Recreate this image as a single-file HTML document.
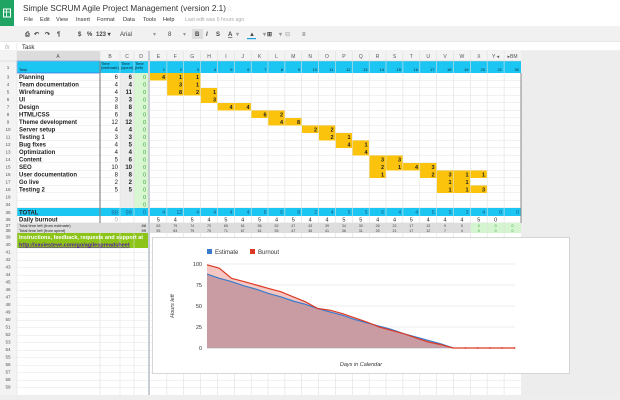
<!DOCTYPE html>
<html><head><meta charset="utf-8"><style>
html,body{margin:0;padding:0;width:620px;height:400px;overflow:hidden;background:#fff}
svg{display:block;font-family:"Liberation Sans",Arial,sans-serif}
</style></head><body>
<svg width="620" height="400" viewBox="0 0 620 400" xmlns="http://www.w3.org/2000/svg">
<defs>
<pattern id="hl" x="0" y="73" width="10" height="7.5" patternUnits="userSpaceOnUse"><rect width="10" height="7.5" fill="none"/><line x1="0" y1="7.25" x2="10" y2="7.25" stroke="#e6e6e6" stroke-width="0.6"/></pattern>
</defs>
<rect x="0" y="0" width="620" height="27" fill="#fff"/>
<rect x="0" y="0" width="14" height="27" fill="#1fa463"/>
<rect x="3.5" y="9" width="7" height="8" fill="none" stroke="#fff" stroke-width="1"/>
<line x1="3.5" y1="12" x2="10.5" y2="12" stroke="#fff" stroke-width="0.8"/><line x1="6.5" y1="9" x2="6.5" y2="17" stroke="#fff" stroke-width="0.8"/>
<text x="23" y="11" font-size="8.2" fill="#333">Simple SCRUM Agile Project Management (version 2.1)</text>
<text x="226" y="11" font-size="8" fill="#ccc">☆</text>
<g font-size="5.6" fill="#333"><text x="24" y="21">File</text><text x="40" y="21">Edit</text><text x="56" y="21">View</text><text x="76" y="21">Insert</text><text x="97" y="21">Format</text><text x="123" y="21">Data</text><text x="143" y="21">Tools</text><text x="163" y="21">Help</text></g>
<text x="185" y="21" font-size="5.2" fill="#aaa">Last edit was 6 hours ago</text>
<rect x="0" y="26" width="620" height="16" fill="#f1f1f1"/>
<line x1="0" y1="41.5" x2="620" y2="41.5" stroke="#ddd" stroke-width="0.6"/>
<g font-size="6" fill="#444" font-weight="bold"><text x="25" y="36">⎙</text><text x="34" y="36">↶</text><text x="45" y="36">↷</text><text x="57" y="36">¶</text><text x="78" y="36">$</text><text x="87" y="36">%</text><text x="96" y="36">123 ▾</text><text x="120" y="36" font-weight="normal">Arial</text><text x="153" y="36" font-weight="normal" fill="#999">▾</text><text x="168" y="36" font-weight="normal">8</text><text x="183" y="36" fill="#999" font-weight="normal">▾</text></g>
<rect x="192" y="29" width="11" height="10" fill="#ddd"/>
<g font-size="6" fill="#444" font-weight="bold"><text x="195" y="36">B</text><text x="206" y="36" font-style="italic">I</text><text x="216" y="36">S</text><text x="228" y="36" text-decoration="underline">A</text><text x="236" y="36" fill="#999">▾</text><text x="249" y="36">▲</text><text x="263" y="36" fill="#999">▾</text><text x="267" y="36">⊞</text><text x="279" y="36" fill="#999">▾</text><text x="285" y="36" fill="#bbb">⊟</text><text x="302" y="36">≡</text></g>
<rect x="247" y="38" width="9" height="1.2" fill="#1ea0e0"/>
<rect x="0" y="42" width="620" height="9" fill="#fff"/>
<text x="5" y="49" font-size="6" fill="#aaa" font-style="italic">fx</text>
<line x1="17" y1="43" x2="17" y2="50" stroke="#ddd" stroke-width="0.6"/>
<text x="22" y="49" font-size="6" fill="#222">Task</text>
<line x1="0" y1="51" x2="620" y2="51" stroke="#ccc" stroke-width="0.6"/>
<rect x="521" y="51" width="99" height="349" fill="#ededed"/>
<rect x="0" y="51" width="521" height="10" fill="#f3f3f3"/>
<rect x="17" y="51" width="83" height="10" fill="#dcdcdc"/>
<rect x="0" y="61" width="17" height="335" fill="#f3f3f3"/>
<rect x="17" y="73" width="504" height="323" fill="url(#hl)"/>
<rect x="120" y="73" width="14" height="135" fill="#ececec"/>
<rect x="134" y="73" width="14" height="135" fill="#d8f6d2"/>
<rect x="17" y="61" width="131" height="12" fill="#1bc6f2"/>
<rect x="150" y="61" width="371" height="12" fill="#1bc6f2"/>
<rect x="17" y="61" width="83" height="12" fill="none" stroke="#3a78e0" stroke-width="0.8"/>
<rect x="17" y="208" width="131" height="8" fill="#1bc6f2"/>
<rect x="150" y="208" width="371" height="8" fill="#1bc6f2"/>
<rect x="17" y="223" width="131" height="10" fill="#dddddd"/>
<rect x="150" y="223" width="320" height="10" fill="#dddddd"/>
<rect x="470" y="223" width="51" height="10" fill="#d4f5cf"/>
<rect x="17" y="233" width="131" height="15" fill="#8cc418"/>
<g fill="#fcc30d">
<rect x="150" y="73" width="50.6" height="7.5"/>
<rect x="166.9" y="80.5" width="33.7" height="7.5"/>
<rect x="166.9" y="88" width="50.5" height="7.5"/>
<rect x="200.6" y="95.5" width="16.9" height="7.5"/>
<rect x="217.4" y="103" width="33.7" height="7.5"/>
<rect x="251.2" y="110.5" width="33.7" height="7.5"/>
<rect x="268" y="118" width="33.7" height="7.5"/>
<rect x="301.7" y="125.5" width="33.7" height="7.5"/>
<rect x="318.6" y="133" width="33.7" height="7.5"/>
<rect x="335.5" y="140.5" width="33.7" height="7.5"/>
<rect x="352.3" y="148" width="16.9" height="7.5"/>
<rect x="369.2" y="155.5" width="33.7" height="7.5"/>
<rect x="369.2" y="163" width="67.4" height="7.5"/>
<rect x="369.2" y="170.5" width="16.8" height="7.5"/>
<rect x="419.8" y="170.5" width="67.4" height="7.5"/>
<rect x="436.6" y="178" width="33.7" height="7.5"/>
<rect x="436.6" y="185.5" width="50.6" height="7.5"/>
</g>
<g stroke="#e0e0e0" stroke-width="0.6">
<line x1="17" y1="51" x2="17" y2="396"/><line x1="120" y1="51" x2="120" y2="396"/><line x1="134" y1="51" x2="134" y2="396"/>
<line x1="166.9" y1="51" x2="166.9" y2="396"/><line x1="183.7" y1="51" x2="183.7" y2="396"/><line x1="200.6" y1="51" x2="200.6" y2="396"/><line x1="217.4" y1="51" x2="217.4" y2="396"/><line x1="234.3" y1="51" x2="234.3" y2="396"/><line x1="251.2" y1="51" x2="251.2" y2="396"/><line x1="268" y1="51" x2="268" y2="396"/><line x1="284.9" y1="51" x2="284.9" y2="396"/><line x1="301.7" y1="51" x2="301.7" y2="396"/><line x1="318.6" y1="51" x2="318.6" y2="396"/><line x1="335.5" y1="51" x2="335.5" y2="396"/><line x1="352.3" y1="51" x2="352.3" y2="396"/><line x1="369.2" y1="51" x2="369.2" y2="396"/><line x1="386" y1="51" x2="386" y2="396"/><line x1="402.9" y1="51" x2="402.9" y2="396"/><line x1="419.8" y1="51" x2="419.8" y2="396"/><line x1="436.6" y1="51" x2="436.6" y2="396"/><line x1="453.5" y1="51" x2="453.5" y2="396"/><line x1="470.3" y1="51" x2="470.3" y2="396"/><line x1="487.2" y1="51" x2="487.2" y2="396"/><line x1="504.1" y1="51" x2="504.1" y2="396"/>
</g>
<line x1="100" y1="51" x2="100" y2="396" stroke="#ddd" stroke-width="0.6"/>
<line x1="100" y1="61" x2="100" y2="223" stroke="#888" stroke-width="1.2"/>
<rect x="148" y="51" width="2" height="345" fill="#c9cdd6"/>
<line x1="521" y1="73" x2="521" y2="223" stroke="#888" stroke-width="1"/>
<line x1="0" y1="61" x2="521" y2="61" stroke="#ccc" stroke-width="0.5"/>
<g font-size="5" fill="#555" text-anchor="middle">
<text x="58" y="58">A</text><text x="110" y="58">B</text><text x="127" y="58">C</text><text x="141" y="58">D</text>
<text x="158.4" y="58">E</text><text x="175.3" y="58">F</text><text x="192.2" y="58">G</text><text x="209" y="58">H</text><text x="225.9" y="58">I</text><text x="242.7" y="58">J</text><text x="259.6" y="58">K</text><text x="276.5" y="58">L</text><text x="293.3" y="58">M</text><text x="310.2" y="58">N</text><text x="327" y="58">O</text><text x="343.9" y="58">P</text><text x="360.8" y="58">Q</text><text x="377.6" y="58">R</text><text x="394.5" y="58">S</text><text x="411.3" y="58">T</text><text x="428.2" y="58">U</text><text x="445" y="58">V</text><text x="461.9" y="58">W</text><text x="478.8" y="58">X</text><text x="495.6" y="58">Y ◂</text><text x="512.5" y="58">▸BM</text>
</g>
<g font-size="4.6" fill="#555" text-anchor="middle">
<text x="8" y="69">1</text><text x="8" y="78.5">3</text><text x="8" y="86">4</text><text x="8" y="93.5">5</text><text x="8" y="101">6</text><text x="8" y="108.5">7</text><text x="8" y="116">8</text><text x="8" y="123.5">9</text><text x="8" y="131">10</text><text x="8" y="138.5">11</text><text x="8" y="146">12</text><text x="8" y="153.5">13</text><text x="8" y="161">14</text><text x="8" y="168.5">15</text><text x="8" y="176">16</text><text x="8" y="183.5">17</text><text x="8" y="191">18</text><text x="8" y="198.5">19</text><text x="8" y="206">34</text><text x="8" y="214">35</text><text x="8" y="221">36</text><text x="8" y="227">37</text><text x="8" y="232">38</text><text x="8" y="238.5">39</text><text x="8" y="246">40</text>
<text x="8" y="253.5">41</text><text x="8" y="261">42</text><text x="8" y="268.5">43</text><text x="8" y="276">44</text><text x="8" y="283.5">45</text><text x="8" y="291">46</text><text x="8" y="298.5">47</text><text x="8" y="306">48</text><text x="8" y="313.5">49</text><text x="8" y="321">50</text><text x="8" y="328.5">51</text><text x="8" y="336">52</text><text x="8" y="343.5">53</text><text x="8" y="351">54</text><text x="8" y="358.5">55</text><text x="8" y="366">56</text><text x="8" y="373.5">57</text><text x="8" y="381">58</text><text x="8" y="388.5">59</text>
</g>
<g font-size="4" fill="#123">
<text x="19" y="71">Task</text><text x="101" y="65">Time</text><text x="101" y="69">(estimate)</text><text x="121" y="65">Time</text><text x="121" y="69">(spent)</text><text x="135" y="65">Time</text><text x="135" y="69">(left)</text>
</g>
<g font-size="4" fill="#123" text-anchor="end">
<text x="165" y="71">1</text><text x="182" y="71">2</text><text x="199" y="71">3</text><text x="216" y="71">4</text><text x="232.5" y="71">5</text><text x="249.5" y="71">6</text><text x="266.5" y="71">7</text><text x="283" y="71">8</text><text x="300" y="71">9</text><text x="317" y="71">10</text><text x="333.5" y="71">11</text><text x="350.5" y="71">12</text><text x="367.5" y="71">13</text><text x="384" y="71">14</text><text x="401" y="71">15</text><text x="418" y="71">16</text><text x="434.5" y="71">17</text><text x="451.5" y="71">18</text><text x="468.5" y="71">19</text><text x="485" y="71">20</text><text x="502" y="71">21</text><text x="519" y="71">30</text>
</g>
<g font-size="6" font-weight="bold" fill="#222">
<text x="19" y="79">Planning</text><text x="19" y="86.5">Team documentation</text><text x="19" y="94">Wireframing</text><text x="19" y="101.5">UI</text><text x="19" y="109">Design</text><text x="19" y="116.5">HTML/CSS</text><text x="19" y="124">Theme development</text><text x="19" y="131.5">Server setup</text><text x="19" y="139">Testing 1</text><text x="19" y="146.5">Bug fixes</text><text x="19" y="154">Optimization</text><text x="19" y="161.5">Content</text><text x="19" y="169">SEO</text><text x="19" y="176.5">User documentation</text><text x="19" y="184">Go live</text><text x="19" y="191.5">Testing 2</text>
<text x="19" y="214.5">TOTAL</text><text x="19" y="221.5">Daily burnout</text>
</g>
<g font-size="6" fill="#222" text-anchor="end">
<text x="118" y="79">6</text><text x="118" y="86.5">4</text><text x="118" y="94">4</text><text x="118" y="101.5">3</text><text x="118" y="109">8</text><text x="118" y="116.5">6</text><text x="118" y="124">12</text><text x="118" y="131.5">4</text><text x="118" y="139">3</text><text x="118" y="146.5">4</text><text x="118" y="154">4</text><text x="118" y="161.5">5</text><text x="118" y="169">10</text><text x="118" y="176.5">8</text><text x="118" y="184">2</text><text x="118" y="191.5">5</text>
</g>
<g font-size="6" fill="#222" text-anchor="end" font-weight="bold">
<text x="132" y="79">6</text><text x="132" y="86.5">4</text><text x="132" y="94">11</text><text x="132" y="101.5">3</text><text x="132" y="109">8</text><text x="132" y="116.5">8</text><text x="132" y="124">12</text><text x="132" y="131.5">4</text><text x="132" y="139">3</text><text x="132" y="146.5">5</text><text x="132" y="154">4</text><text x="132" y="161.5">6</text><text x="132" y="169">10</text><text x="132" y="176.5">8</text><text x="132" y="184">2</text><text x="132" y="191.5">5</text>
</g>
<g font-size="5.5" fill="#3aa63a" text-anchor="end">
<text x="146" y="79">0</text><text x="146" y="86.5">0</text><text x="146" y="94">0</text><text x="146" y="101.5">0</text><text x="146" y="109">0</text><text x="146" y="116.5">0</text><text x="146" y="124">0</text><text x="146" y="131.5">0</text><text x="146" y="139">0</text><text x="146" y="146.5">0</text><text x="146" y="154">0</text><text x="146" y="161.5">0</text><text x="146" y="169">0</text><text x="146" y="176.5">0</text><text x="146" y="184">0</text><text x="146" y="191.5">0</text><text x="146" y="199">0</text><text x="146" y="206.5">0</text>
</g>
<g font-size="6" fill="#1a6a9a" text-anchor="end"><text x="118" y="214.5">88</text><text x="132" y="214.5">99</text><text x="146" y="214.5">0</text></g>
<text x="118" y="221.5" font-size="6" fill="#aaa" text-anchor="end">0</text>
<g font-size="4" fill="#222"><text x="19" y="227">Total time left (from estimate)</text><text x="19" y="232">Total time left (from spent)</text></g>
<g font-size="4" fill="#222" text-anchor="end"><text x="146" y="227">88</text><text x="146" y="232">99</text></g>
<text x="19" y="239" font-size="5.5" font-weight="bold" fill="#fff">Instructions, feedback, requests and support at</text>
<text x="19" y="246.5" font-size="5.5" font-weight="bold" fill="#5a1fa0" text-decoration="underline">http://xaviesteve.com/go/agilespreadsheet</text>
<g font-size="5.5" fill="#222" text-anchor="end" font-weight="bold">
<text x="165" y="79">4</text><text x="182" y="79">1</text><text x="199" y="79">1</text>
<text x="182" y="86.5">3</text><text x="199" y="86.5">1</text>
<text x="182" y="94">8</text><text x="199" y="94">2</text><text x="216" y="94">1</text>
<text x="216" y="101.5">3</text>
<text x="232.5" y="109">4</text><text x="249.5" y="109">4</text>
<text x="266.5" y="116.5">6</text><text x="283" y="116.5">2</text>
<text x="283" y="124">4</text><text x="300" y="124">8</text>
<text x="317" y="131.5">2</text><text x="333.5" y="131.5">2</text>
<text x="333.5" y="139">2</text><text x="350.5" y="139">1</text>
<text x="350.5" y="146.5">4</text><text x="367.5" y="146.5">1</text>
<text x="367.5" y="154">4</text>
<text x="384" y="161.5">3</text><text x="401" y="161.5">3</text>
<text x="384" y="169">2</text><text x="401" y="169">1</text><text x="418" y="169">4</text><text x="434.5" y="169">3</text>
<text x="384" y="176.5">1</text><text x="434.5" y="176.5">2</text><text x="451.5" y="176.5">3</text><text x="468.5" y="176.5">1</text><text x="485" y="176.5">1</text>
<text x="451.5" y="184">1</text><text x="468.5" y="184">1</text>
<text x="451.5" y="191.5">1</text><text x="468.5" y="191.5">1</text><text x="485" y="191.5">3</text>
</g>
<g font-size="5" fill="#1a5a8a" text-anchor="end">
<text x="165" y="214">4</text><text x="182" y="214">12</text><text x="199" y="214">4</text><text x="216" y="214">4</text><text x="232.5" y="214">4</text><text x="249.5" y="214">4</text><text x="266.5" y="214">6</text><text x="283" y="214">6</text><text x="300" y="214">8</text><text x="317" y="214">2</text><text x="333.5" y="214">4</text><text x="350.5" y="214">5</text><text x="367.5" y="214">5</text><text x="384" y="214">6</text><text x="401" y="214">4</text><text x="418" y="214">4</text><text x="434.5" y="214">5</text><text x="451.5" y="214">5</text><text x="468.5" y="214">3</text><text x="485" y="214">4</text><text x="502" y="214">0</text><text x="519" y="214">0</text>
</g>
<g font-size="5.5" fill="#222" text-anchor="middle">
<text x="158.4" y="221.5">5</text><text x="175.3" y="221.5">4</text><text x="192.2" y="221.5">5</text><text x="209" y="221.5">4</text><text x="225.9" y="221.5">5</text><text x="242.7" y="221.5">4</text><text x="259.6" y="221.5">5</text><text x="276.5" y="221.5">4</text><text x="293.3" y="221.5">5</text><text x="310.2" y="221.5">4</text><text x="327" y="221.5">4</text><text x="343.9" y="221.5">5</text><text x="360.8" y="221.5">5</text><text x="377.6" y="221.5">4</text><text x="394.5" y="221.5">4</text><text x="411.3" y="221.5">5</text><text x="428.2" y="221.5">4</text><text x="445" y="221.5">4</text><text x="461.9" y="221.5">4</text><text x="478.8" y="221.5">5</text><text x="495.6" y="221.5">0</text>
</g>
<g font-size="3.6" fill="#444" text-anchor="middle">
<text x="158.4" y="227">83</text><text x="175.3" y="227">79</text><text x="192.2" y="227">74</text><text x="209" y="227">70</text><text x="225.9" y="227">65</text><text x="242.7" y="227">61</text><text x="259.6" y="227">56</text><text x="276.5" y="227">52</text><text x="293.3" y="227">47</text><text x="310.2" y="227">43</text><text x="327" y="227">39</text><text x="343.9" y="227">34</text><text x="360.8" y="227">30</text><text x="377.6" y="227">26</text><text x="394.5" y="227">22</text><text x="411.3" y="227">17</text><text x="428.2" y="227">13</text><text x="445" y="227">9</text><text x="461.9" y="227">5</text><text x="478.8" y="227" fill="#3aa63a">0</text><text x="495.6" y="227" fill="#3aa63a">0</text><text x="512.5" y="227" fill="#3aa63a">0</text>
<text x="158.4" y="232">95</text><text x="175.3" y="232">83</text><text x="192.2" y="232">79</text><text x="209" y="232">75</text><text x="225.9" y="232">71</text><text x="242.7" y="232">67</text><text x="259.6" y="232">61</text><text x="276.5" y="232">55</text><text x="293.3" y="232">47</text><text x="310.2" y="232">45</text><text x="327" y="232">41</text><text x="343.9" y="232">36</text><text x="360.8" y="232">31</text><text x="377.6" y="232">25</text><text x="394.5" y="232">21</text><text x="411.3" y="232">17</text><text x="428.2" y="232">12</text><text x="445" y="232">7</text><text x="461.9" y="232">4</text><text x="478.8" y="232" fill="#3aa63a">0</text><text x="495.6" y="232" fill="#3aa63a">0</text><text x="512.5" y="232" fill="#3aa63a">0</text>
</g>
<rect x="152.5" y="237.5" width="417" height="136" fill="#fff" stroke="#ccc" stroke-width="0.8"/>
<rect x="207" y="249" width="5" height="5" fill="#3a7ccb"/>
<text x="215" y="254" font-size="6" fill="#333">Estimate</text>
<rect x="250" y="249" width="5" height="5" fill="#dc3a26"/>
<text x="258" y="254" font-size="6" fill="#333">Burnout</text>
<g stroke="#e6e6e6" stroke-width="0.8"><line x1="207" y1="264" x2="515" y2="264"/><line x1="207" y1="285" x2="515" y2="285"/><line x1="207" y1="306" x2="515" y2="306"/><line x1="207" y1="327" x2="515" y2="327"/></g>
<g font-size="5.5" fill="#333" text-anchor="end"><text x="202" y="266">100</text><text x="202" y="287">75</text><text x="202" y="308">50</text><text x="202" y="329">25</text><text x="202" y="350">0</text></g>
<text transform="translate(174,306) rotate(-90)" font-size="5.5" font-style="italic" fill="#333" text-anchor="middle">Hours left</text>
<text x="361" y="366" font-size="5.5" font-style="italic" fill="#333" text-anchor="middle">Days in Calendar</text>
<polygon fill="#f5c7c2" points="207,264.8 219.3,268.2 231.6,278.3 243.9,281.6 256.2,285 268.5,288.4 280.8,291.7 293.1,296.8 305.4,301.8 317.7,308.5 330,310.2 342.3,313.6 354.6,317.8 366.9,322 379.2,327 391.5,330.4 403.8,333.7 416.1,337.9 428.4,342.1 440.7,344.6 453,348 207,348"/>
<polygon fill="#c99ca4" points="207,274.1 219.3,278.3 231.6,281.6 243.9,285.8 256.2,289.2 268.5,293.4 280.8,296.8 293.1,301 305.4,304.3 317.7,308.5 330,311.9 342.3,315.2 354.6,319.4 366.9,322.8 379.2,326.2 391.5,329.5 403.8,333.7 416.1,337.1 428.4,340.4 440.7,343.8 453,348 207,348"/>
<line x1="207" y1="348" x2="515" y2="348" stroke="#999" stroke-width="0.6"/>
<polyline fill="none" stroke="#3a7ccb" stroke-width="1.2" points="207,274.1 219.3,278.3 231.6,281.6 243.9,285.8 256.2,289.2 268.5,293.4 280.8,296.8 293.1,301 305.4,304.3 317.7,308.5 330,311.9 342.3,315.2 354.6,319.4 366.9,322.8 379.2,326.2 391.5,329.5 403.8,333.7 416.1,337.1 428.4,340.4 440.7,343.8 453,348"/>
<polyline fill="none" stroke="#dc3a26" stroke-width="1.2" points="207,264.8 219.3,268.2 231.6,278.3 243.9,281.6 256.2,285 268.5,288.4 280.8,291.7 293.1,296.8 305.4,301.8 317.7,308.5 330,310.2 342.3,313.6 354.6,317.8 366.9,322 379.2,327 391.5,330.4 403.8,333.7 416.1,337.9 428.4,342.1 440.7,344.6 453,348 514.5,348"/>
<g fill="#dc3a26"><circle cx="465.3" cy="348" r="0.9"/><circle cx="477.6" cy="348" r="0.9"/><circle cx="489.9" cy="348" r="0.9"/><circle cx="502.2" cy="348" r="0.9"/><circle cx="514.5" cy="348" r="0.9"/></g>
<rect x="0" y="395" width="620" height="5" fill="#eeeeee"/>
</svg>
</body></html>
